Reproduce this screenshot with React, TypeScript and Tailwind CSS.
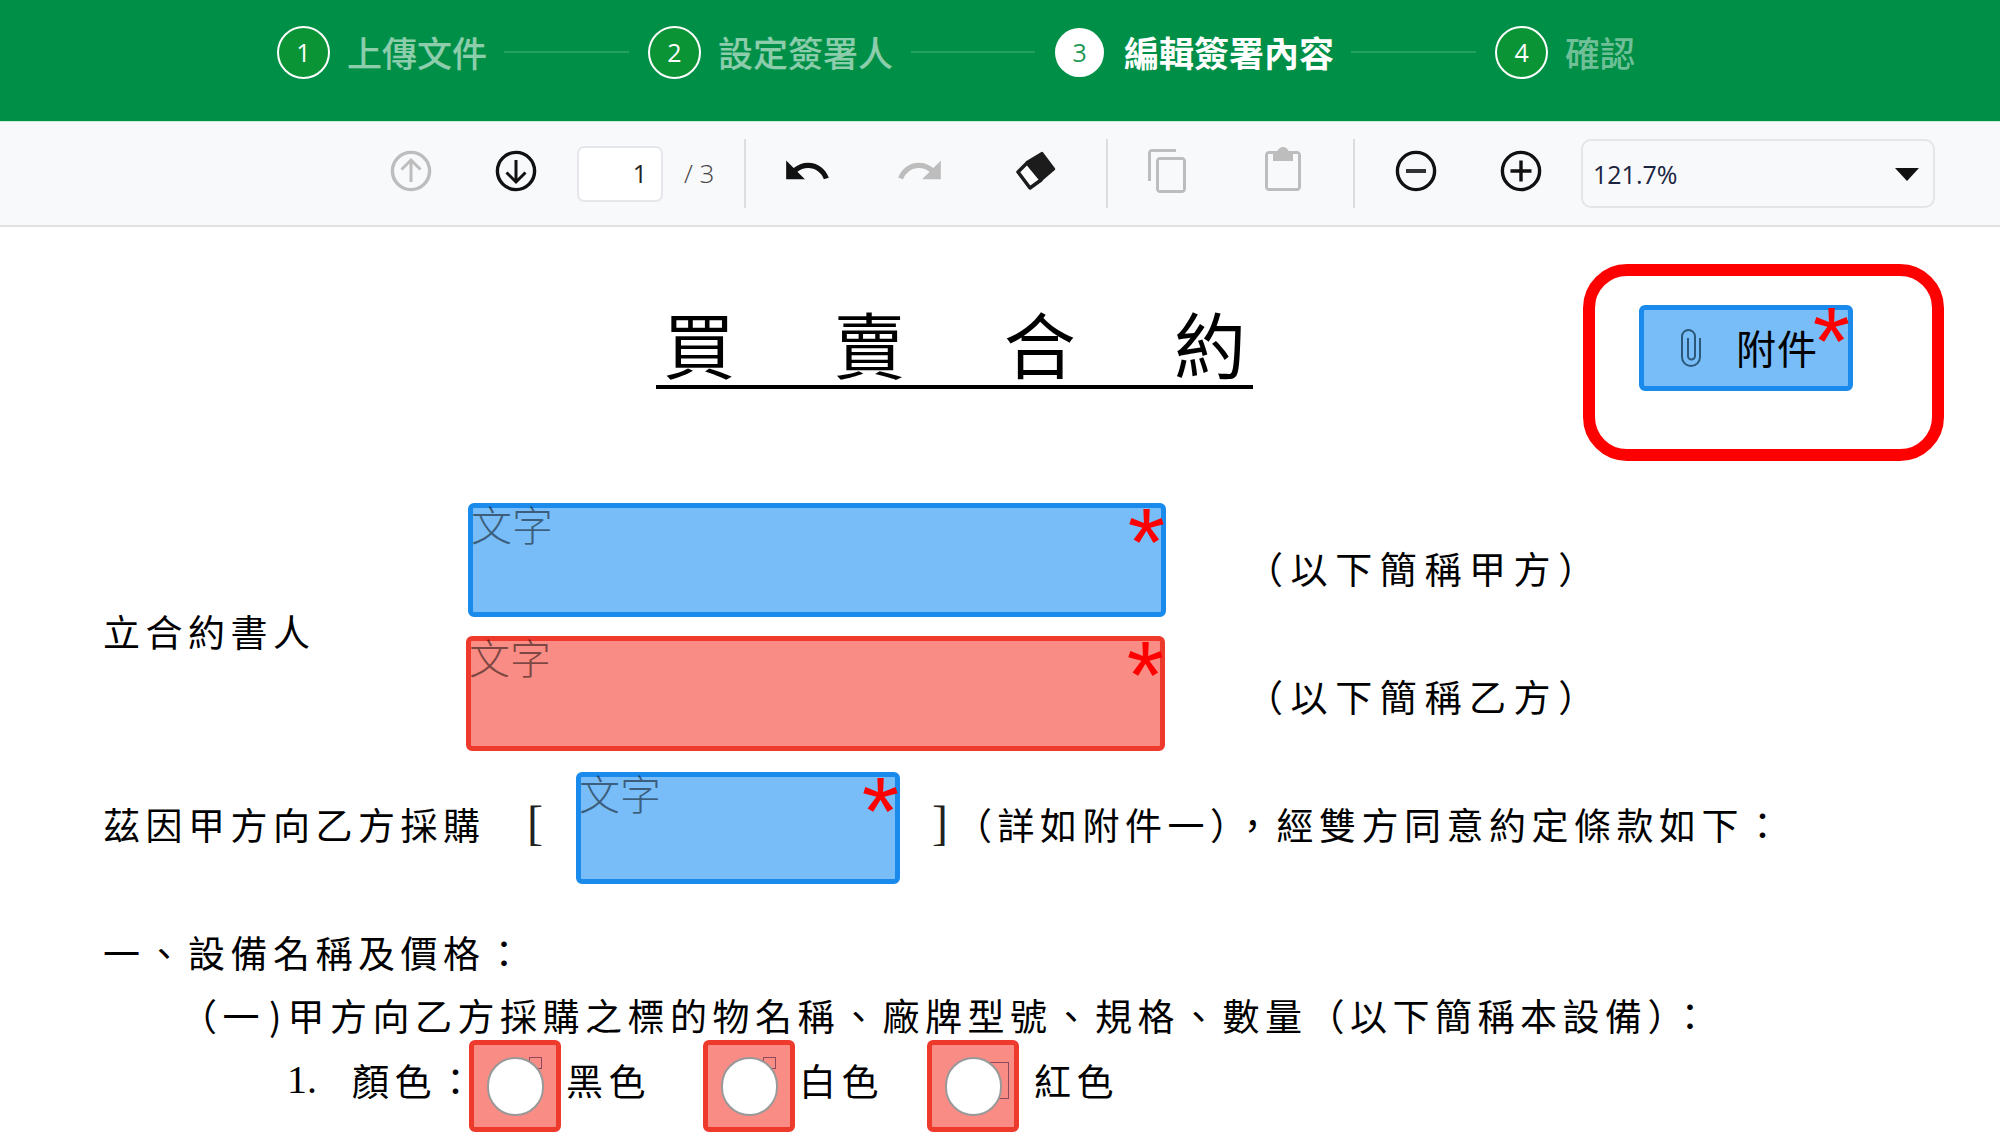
import React from "react";

const cjk = { fontFamily: '"Noto Sans CJK TC", "Noto Sans", sans-serif' };
const latin = { fontFamily: '"Open Sans", sans-serif' };

function Step({ n, label, state }: { n: string; label: string; state: "done" | "active" | "todo" }) {
  const active = state === "active";
  return (
    <div className="flex items-center">
      {active ? (
        <div className="flex h-[49px] w-[49px] items-center justify-center rounded-full bg-white text-[25px] text-[#1f9a55]" style={latin}>{n}</div>
      ) : (
        <div className="flex h-[53px] w-[53px] items-center justify-center rounded-full border-2 border-white bg-[#0a9436] text-[25px] text-white" style={latin}>{n}</div>
      )}
      <span
        className={
          active
            ? "mt-[-2px] ml-[20px] text-[35px] leading-[44px] font-bold text-white"
            : state === "done"
              ? "mt-[-2px] ml-[17px] text-[35px] leading-[44px] font-medium text-white/55"
              : "mt-[-2px] ml-[17px] text-[35px] leading-[44px] font-medium text-white/45"
        }
        style={cjk}
      >
        {label}
      </span>
    </div>
  );
}

function CircleIcon({ kind, color }: { kind: "up" | "down" | "minus" | "plus"; color: string }) {
  return (
    <svg width="44" height="44" viewBox="0 0 44 44" fill="none" stroke={color} strokeWidth="3.4" className="mb-[6px] shrink-0">
      <circle cx="22" cy="22" r="18.6" />
      {kind === "up" && <path d="M22 33V11M12.5 20.5L22 11l9.5 9.5" strokeWidth="3" />}
      {kind === "down" && <path d="M22 11v22M12.5 23.5L22 33l9.5-9.5" strokeWidth="3" />}
      {kind === "minus" && <path d="M12 22h20" strokeWidth="4" stroke="#333" />}
      {kind === "plus" && <path d="M11.500 22h21M22 11.500v21" strokeWidth="3.4" />}
    </svg>
  );
}

function Sep({ className }: { className: string }) {
  return <div className={"h-[69px] w-[2px] shrink-0 bg-[#dcdde0] " + className} />;
}

function Star({ className }: { className: string }) {
  return (
    <span className={"absolute text-[96px] leading-none font-normal text-[#ff0000] " + className} style={{ fontFamily: '"Liberation Sans", sans-serif' }}>
      *
    </span>
  );
}

function TextField({ className, tone }: { className: string; tone: "blue" | "red" }) {
  return (
    <div
      className={
        "relative shrink-0 rounded-[6px] border-[5px] " +
        (tone === "blue" ? "border-[#1a8bec] bg-[#78bdf8] " : "border-[#ee392d] bg-[#f98c84] ") +
        className
      }
    >
      <span className="absolute top-[-10px] left-[-2px] text-[41px] leading-[50px] font-light text-black/50" style={cjk}>
        文字
      </span>
      <Star className="top-[-14px] right-[-4px]" />
    </div>
  );
}

function Check({ mark }: { mark: string }) {
  return (
    <div className="relative flex h-[92px] w-[92px] shrink-0 items-center justify-center rounded-[6px] border-[5px] border-[#ee392d] bg-[#f98c84]">
      <div className={"absolute border border-[#8c4a5c] " + mark} />
      <div className="relative h-[59px] w-[57px] rounded-full border-2 border-[#999999] bg-white" />
    </div>
  );
}

const doc = "text-[37px] leading-[40px] tracking-[5.500px] text-black whitespace-nowrap";
const bracket = "mt-[31px] text-[48px] leading-[40px] text-[#222222]";

export default function App() {
  return (
    <div className="flex h-[1142px] w-[2000px] flex-col overflow-hidden bg-white" style={cjk}>
      <header className="flex h-[122px] shrink-0 items-start border-b border-[#c9ecd8] bg-[#008f47] pt-[26px] pl-[277px]">
        <Step n="1" label="上傳文件" state="done" />
        <div className="mt-[25px] ml-[17px] h-[2px] w-[125px] bg-white/15" />
        <div className="ml-[19px]"><Step n="2" label="設定簽署人" state="done" /></div>
        <div className="mt-[25px] ml-[18px] h-[2px] w-[124px] bg-white/15" />
        <div className="mt-[2px] ml-[20px]"><Step n="3" label="編輯簽署內容" state="active" /></div>
        <div className="mt-[25px] ml-[17px] h-[2px] w-[125px] bg-white/15" />
        <div className="ml-[19px]"><Step n="4" label="確認" state="todo" /></div>
      </header>

      <div className="flex h-[105px] shrink-0 items-center border-b-2 border-[#e0e0e2] bg-[#f8f9fb] pl-[389px]">
        <CircleIcon kind="up" color="#bdbdbd" />
        <div className="ml-[61px]"><CircleIcon kind="down" color="#111111" /></div>
        <div className="ml-[39px] flex h-[56px] w-[86px] items-center justify-end rounded-[7px] border-2 border-[#e6e7ea] bg-white pr-[14px] text-[25px] text-[#222222]" style={latin}>1</div>
        <span className="ml-[21px] w-[30px] text-[26px] font-light whitespace-nowrap text-[#444444]" style={latin}>/ 3</span>
        <Sep className="ml-[30px]" />
        <svg width="50" height="50" viewBox="0 0 24 24" fill="#111111" className="mb-[6px] ml-[36px] shrink-0"><path d="M12.500 8c-2.650 0-5.050.990-6.900 2.600L2 7v9h9l-3.620-3.620c1.390-1.160 3.160-1.880 5.120-1.880 3.540 0 6.550 2.310 7.600 5.500l2.370-.780C21.080 11.030 17.150 8 12.500 8z" /></svg>
        <svg width="50" height="50" viewBox="0 0 24 24" fill="#bdbdbd" className="mb-[6px] ml-[63px] shrink-0"><path d="M18.400 10.600C16.550 8.990 14.150 8 11.500 8c-4.650 0-8.580 3.030-9.960 7.220L3.900 16c1.050-3.190 4.050-5.500 7.600-5.500 1.950 0 3.730.720 5.120 1.880L13 16h9V7l-3.600 3.600z" /></svg>
        <svg width="40" height="40" viewBox="0 0 40 40" className="mb-[6px] ml-[71px] shrink-0">
          <path d="M26 2L38 18 24 30 11 11z" fill="#1c1c1c" stroke="#1c1c1c" strokeWidth="2.500" strokeLinejoin="round" />
          <path d="M11 12L2 21 14 37 25 29z" fill="#ffffff" stroke="#1c1c1c" strokeWidth="3.500" strokeLinejoin="round" />
        </svg>
        <Sep className="ml-[50px]" />
        <svg width="48" height="48" viewBox="0 0 24 24" fill="#bdbdbd" className="mb-[6px] ml-[36px] shrink-0"><path fillRule="evenodd" d="M16 1H4c-1.100 0-2 .900-2 2v14h1.500V2.500H16V1zM19 5H8c-1.100 0-2 .900-2 2v14c0 1.100.900 2 2 2h11c1.100 0 2-.900 2-2V7c0-1.100-.900-2-2-2zM19.500 21.500H7.500V6.500h12v15z" /></svg>
        <svg width="48" height="48" viewBox="0 0 24 24" fill="#bdbdbd" className="mb-[6px] ml-[67px] shrink-0"><path fillRule="evenodd" d="M19 2h-4.180C14.400.840 13.300 0 12 0c-1.300 0-2.400.840-2.820 2H5c-1.100 0-2 .900-2 2v16c0 1.100.900 2 2 2h14c1.100 0 2-.900 2-2V4c0-1.100-.900-2-2-2zM19.500 20.500H4.500V3.500H7V7h10V3.500h2.500v17z" /></svg>
        <Sep className="ml-[46px]" />
        <div className="ml-[39px]"><CircleIcon kind="minus" color="#111111" /></div>
        <div className="ml-[61px]"><CircleIcon kind="plus" color="#111111" /></div>
        <div className="ml-[38px] flex h-[69px] w-[354px] items-center justify-between rounded-[10px] border-2 border-[#e4e5e9] bg-[#f8f9fb] pt-[2px] pr-[14px] pl-[10px] text-[25px] text-[#1b2440]" style={latin}>
          <span>121.7%</span>
          <svg width="24" height="13" viewBox="0 0 24 13" fill="#111111"><path d="M0 0h24L12 13z" /></svg>
        </div>
      </div>

      <main className="relative flex-1 overflow-hidden pl-[103px]">
        <div className="mt-[78px] ml-[553px] flex h-[84px] w-[597px] justify-between border-b-[4px] border-black px-[7px] text-[72px] leading-[74px] text-black">
          <span>買</span><span>賣</span><span>合</span><span>約</span>
        </div>

        <div className="absolute top-[37px] left-[1583px] h-[197px] w-[361px] rounded-[44px] border-[12px] border-[#ff0000]">
          <div className="absolute top-[29px] left-[44px] flex h-[86px] w-[214px] items-center rounded-[6px] border-[5px] border-[#1a8bec] bg-[#78bdf8]">
            <svg width="22" height="40" viewBox="0 0 22 40" fill="none" stroke="#2b5878" strokeWidth="2" className="ml-[36px] shrink-0">
              <path d="M20 10V29a9 9 0 0 1-18 0V8.500a6.500 6.500 0 0 1 13 0V28a3.500 3.500 0 0 1-7 0V10" />
            </svg>
            <span className="mt-[-2px] ml-[34px] text-[40px] leading-[44px] tracking-[1px] text-black">附件</span>
            <Star className="top-[-17px] right-[-2px]" />
          </div>
        </div>

        <div className="mt-[114px] flex h-[248px]">
          <div className={doc + " mt-[108px] w-[363px]"}>立合約書人</div>
          <div className="flex w-[700px] flex-col">
            <TextField tone="blue" className="ml-[2px] h-[114px] w-[698px]" />
            <TextField tone="red" className="mt-[19px] h-[115px] w-[699px]" />
          </div>
          <div className="ml-[80px] flex flex-col pt-[45px]">
            <div className={doc + " tracking-[7.600px]"}>（以下簡稱甲方）</div>
            <div className={doc + " mt-[88px] tracking-[7.600px]"}>（以下簡稱乙方）</div>
          </div>
        </div>

        <div className="mt-[21px] flex h-[112px]">
          <div className={doc + " mt-[32px] w-[424px]"}>茲因甲方向乙方採購</div>
          <div className={bracket + " w-[49px]"} style={{ fontFamily: '"Liberation Serif", serif' }}>[</div>
          <TextField tone="blue" className="h-[112px] w-[324px]" />
          <div className={bracket + " ml-[32px] w-[23px]"} style={{ fontFamily: '"Liberation Serif", serif' }}>]</div>
          <div className={doc + " mt-[32px]"}>（詳如附件一），經雙方同意約定條款如下：</div>
        </div>

        <div className={doc + " mt-[48px]"}>一、設備名稱及價格：</div>
        <div className={doc + " mt-[23px] ml-[77px] flex tracking-[5.400px]"}>
          <span>（一</span>
          <span className="mr-[6px] ml-[4px] tracking-normal">)</span>
          <span>甲方向乙方採購之標的物名稱、廠牌型號、規格、數量（以下簡稱本設備）：</span>
        </div>

        <div className="mt-[5px] ml-[184px] flex h-[92px]">
          <div className="mt-[20px] w-[65px] text-[40px] leading-[40px] text-black" style={{ fontFamily: '"Liberation Serif", serif' }}>1.</div>
          <div className={doc + " mt-[20px] w-[117px]"}>顏色：</div>
          <Check mark="top-[12px] left-[55px] h-[12px] w-[13px]" />
          <div className={doc + " mt-[20px] ml-[5px] w-[137px]"}>黑色</div>
          <Check mark="top-[12px] left-[55px] h-[12px] w-[13px]" />
          <div className={doc + " mt-[20px] ml-[4px] w-[128px]"}>白色</div>
          <Check mark="top-[17px] left-[57px] h-[37px] w-[20px]" />
          <div className={doc + " mt-[20px] ml-[15px]"}>紅色</div>
        </div>
      </main>
    </div>
  );
}
